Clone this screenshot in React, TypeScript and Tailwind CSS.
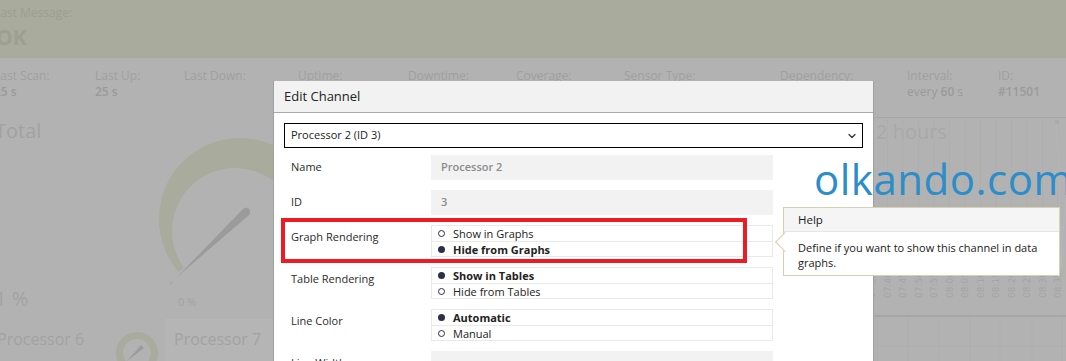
import { ChevronDown } from "lucide-react";

const stats = [
  { label: "Last Scan:", value: "25 s", w: "w-[101px]" },
  { label: "Last Up:", value: "25 s", w: "w-[89px]" },
  { label: "Last Down:", value: "", w: "w-[114px]" },
  { label: "Uptime:", value: "", w: "w-[110px]" },
  { label: "Downtime:", value: "", w: "w-[108px]" },
  { label: "Coverage:", value: "", w: "w-[108px]" },
  { label: "Sensor Type:", value: "", w: "w-[156px]" },
  { label: "Dependency:", value: "", w: "w-[127px]" },
  { label: "Interval:", value: "interval", w: "w-[91px]" },
  { label: "ID:", value: "#11501", w: "w-[80px]" },
];

const times = ["07:35", "07:40", "07:45", "07:50", "07:55", "08:00", "08:05", "08:10", "08:15", "08:20", "08:25", "08:30", "08:35"];

function Radio({ on }: { on: boolean }) {
  return on ? (
    <span className="h-[7px] w-[7px] shrink-0 rounded-full bg-[#2b2f48]" />
  ) : (
    <span className="h-[7px] w-[7px] shrink-0 rounded-full border-[1.5px] border-[#2b2f48] bg-white" />
  );
}

function RadioGroup({ options, selected }: { options: string[]; selected: number }) {
  return (
    <div className="flex h-[32px] w-[342px] flex-col border border-[#e9e9e9]">
      {options.map((o, i) => (
        <div
          key={o}
          className={
            "flex items-center gap-[8px] pl-[6px] text-[11px] leading-none text-[#222] " +
            (i === 0 ? "h-[15px]" : "h-[15px] border-t border-[#e9e9e9]") +
            (i === selected ? " font-bold" : "")
          }
        >
          <Radio on={i === selected} />
          <span>{o}</span>
        </div>
      ))}
    </div>
  );
}

function Row({ label, children }: { label: string; children: React.ReactNode }) {
  return (
    <div className="flex items-start">
      <div className="w-[140px] pt-[4px] text-[11px] leading-[16px] text-[#2b2b2b]">{label}</div>
      {children}
    </div>
  );
}

function Field({ value }: { value: string }) {
  return (
    <div className="flex h-[25px] w-[342px] items-center bg-[#f2f2f2] pl-[10px] text-[11px] font-semibold text-[#8c8c8c]">
      {value}
    </div>
  );
}

export default function App() {
  return (
    <div className="relative h-[361px] w-[1066px] overflow-hidden bg-[#b2b2b2] font-['Open_Sans',sans-serif]">
      {/* page behind the dialog */}
      <div className="h-[58px] bg-[#a9ab9c] pt-[4px] text-[#9d9f91]">
        <div className="ml-[-6px] text-[12px] leading-[18px]">Last Message:</div>
        <div className="ml-[-4px] mt-[1px] text-[21px] font-bold leading-[28px]">OK</div>
      </div>

      <div className="flex h-[59px] pt-[10px] text-[12px] leading-[16px] text-[#a0a0a0]">
        <div className="ml-[-6px] flex">
          {stats.map((s) => (
            <div key={s.label} className={s.w}>
              <div>{s.label}</div>
              <div className="text-[#9a9a9a]">
                {s.value === "interval" ? (
                  <span>
                    every <b className="font-semibold">60</b> s
                  </span>
                ) : (
                  <span className="font-semibold">{s.value}</span>
                )}
              </div>
            </div>
          ))}
        </div>
      </div>

      <div className="flex h-[244px]">
        <div className="flex w-[866px] flex-col">
          <div className="flex h-[202px]">
            <div className="flex w-[150px] flex-col justify-between pt-[2px] pb-[8px] text-[20px] leading-[24px] text-[#a2a2a2]">
              <div className="ml-[-5px]">Total</div>
              <div className="ml-[-5px]">1 %</div>
            </div>
            <svg width="124" height="202" viewBox="0 0 124 202">
              <defs>
                <clipPath id="gclip">
                  <polygon points="90,102 -30,206 -30,-20 130,-20 130,102" />
                </clipPath>
              </defs>
              <path
                clipPath="url(#gclip)"
                fillRule="evenodd"
                fill="#a9ab9c"
                d="M9,102 a81,81 0 1,0 162,0 a81,81 0 1,0 -162,0 Z M22,114 a63,63 0 1,0 126,0 a63,63 0 1,0 -126,0 Z"
              />
              <polygon points="27,160 93,92 99,98" fill="#9b9b9b" />
              <circle cx="96" cy="95" r="4.2" fill="#9b9b9b" />
              <text x="19" y="168" fontSize="8" fill="#a6a6a6">x</text>
              <text x="28" y="189" fontSize="11" fill="#a2a2a2" fontFamily="Open Sans">0 %</text>
            </svg>
          </div>
          <div className="flex flex-1">
            <div className="flex w-[165px] items-start pt-[9px]">
              <div className="ml-[-3px] w-[118px] text-[16px] leading-[22px] text-[#a2a2a2]">Processor 6</div>
              <svg className="mt-[-3px]" width="48" height="36" viewBox="0 0 48 36">
                <circle cx="22" cy="28" r="17.5" fill="none" stroke="#a9ab9c" strokeWidth="7" />
                <polygon points="12,36 26,20 29,23" fill="#9b9b9b" />
              </svg>
            </div>
            <div className="flex-1 bg-[#b5b5b5] pl-[9px] pt-[9px] text-[16px] leading-[22px] text-[#a2a2a2]">
              Processor 7
            </div>
          </div>
        </div>

        <div className="relative flex-1 border-t border-[#a6a6a6]">
          <div className="pl-[10px] pt-[1px] text-[20px] leading-[26px] text-[#a8a8a8]">2 hours</div>
          <svg className="absolute left-0 top-0" width="200" height="244" viewBox="0 0 200 244">
            {times.map((t, i) => (
              <line key={"g" + t} x1={6 + 15.5 * i} y1="2" x2={6 + 15.5 * i} y2="158" stroke="#aeaeae" strokeWidth="1" />
            ))}
            {times.map((t, i) => (
              <text
                key={t}
                x={9 + 15.5 * i}
                y="180"
                fontSize="9"
                fill="#a4a4a4"
                fontFamily="DejaVu Sans"
                transform={`rotate(-90 ${9 + 15.5 * i} 180)`}
              >
                {t}
              </text>
            ))}
            <line x1="0" y1="198" x2="200" y2="198" stroke="#a6a6a6" strokeWidth="2" />
            <line x1="0" y1="228" x2="200" y2="228" stroke="#aeaeae" strokeWidth="1" />
            {[11, 42, 73, 104, 134, 166, 196].map((x) => (
              <line key={x} x1={x} y1="199" x2={x} y2="244" stroke="#aeaeae" strokeWidth="1" />
            ))}
            <polyline points="191,4 196,150" fill="none" stroke="#b9b8ac" strokeWidth="1" />
            <polyline points="200,80 194,150" fill="none" stroke="#b4b6bd" strokeWidth="1" />
            <circle cx="191" cy="4" r="2" fill="#a9a9a9" />
          </svg>
        </div>
      </div>

      {/* dialog */}
      <div className="absolute left-[273px] top-[81px] h-[300px] w-[601px] border-x border-[#a0a0a0] bg-white">
        <div className="flex h-[32px] items-center border-b border-[#a9a9a9] bg-[#f2f2f2] pl-[10px] text-[13px] text-[#222]">
          Edit Channel
        </div>
        <div className="mx-[10px] mt-[10px] flex h-[25px] items-center justify-between border border-black pl-[6px] pr-[4px] text-[11px] text-[#222]">
          <span>Processor 2 (ID 3)</span>
          <ChevronDown size={12} strokeWidth={2.5} className="text-[#333]" />
        </div>
        <div className="mt-[7px] flex flex-col gap-[10px] pl-[17px]">
          <Row label="Name">
            <Field value="Processor 2" />
          </Row>
          <Row label="ID">
            <Field value="3" />
          </Row>
          <Row label="Graph Rendering">
            <RadioGroup options={["Show in Graphs", "Hide from Graphs"]} selected={1} />
          </Row>
          <Row label="Table Rendering">
            <RadioGroup options={["Show in Tables", "Hide from Tables"]} selected={0} />
          </Row>
          <Row label="Line Color">
            <RadioGroup options={["Automatic", "Manual"]} selected={0} />
          </Row>
          <Row label="Line Width">
            <Field value="" />
          </Row>
        </div>
        {/* highlight annotation */}
        <div className="absolute left-[7px] top-[137px] h-[45px] w-[466px] border-4 border-[#ed1c24]" />
      </div>

      {/* help tooltip */}
      <div className="absolute left-[783px] top-[207px] h-[69px] w-[277px] border border-[#d7d1ad] bg-white">
        <div className="absolute left-[-6px] top-[27px] h-[14px] w-[14px] rotate-45 border-b border-l border-[#d7d1ad] bg-white" />
        <div className="flex h-[24px] items-center border-b border-[#e6e6e6] bg-[#f5f5f5] pl-[14px] text-[11.5px] text-[#1a1a1a]">
          Help
        </div>
        <div className="relative pl-[14px] pr-[8px] pt-[8px] text-[11px] leading-[15px] text-[#1a1a1a]">
          Define if you want to show this channel in data graphs.
        </div>
      </div>

      {/* watermark */}
      <div className="absolute left-[814px] top-[158px] whitespace-nowrap text-[42px] leading-[42px] tracking-[0.5px] text-[#2b8dca]">
        olkando.com
      </div>
    </div>
  );
}
